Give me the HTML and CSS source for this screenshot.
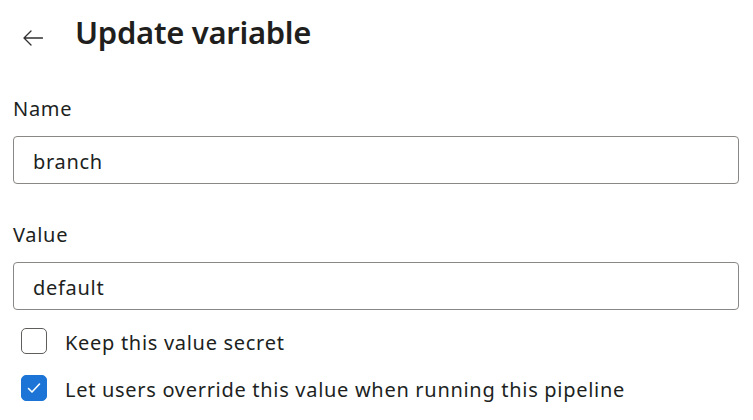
FILE: index.html
```html
<!DOCTYPE html>
<html lang="en">
<head>
<meta charset="utf-8">
<title>Update variable</title>
<link rel="stylesheet" href="styles.css">
</head>
<body>
<div class="page">
  <header class="header">
    <button class="back" aria-label="Back">
      <svg width="20" height="16" viewBox="0 0 20 16" fill="none" stroke="#323130" stroke-width="1.3" stroke-linecap="round" stroke-linejoin="round">
        <path d="M19.5 8H1M8 1L1 8l7 7"/>
      </svg>
    </button>
    <h1 class="title">Update variable</h1>
  </header>
  <div class="field field-name">
    <label class="label">Name</label>
    <div class="input">branch</div>
  </div>
  <div class="field field-value">
    <label class="label">Value</label>
    <div class="input">default</div>
  </div>
  <div class="checks">
    <label class="check">
      <span class="box"></span>
      <span class="check-text">Keep this value secret</span>
    </label>
    <label class="check">
      <span class="box checked">
        <svg width="14" height="12" viewBox="0 0 14 12" fill="none" stroke="#fff" stroke-width="1.6" stroke-linecap="round" stroke-linejoin="round"><path d="M1.5 6.5l3.5 3.5L12.5 2"/></svg>
      </span>
      <span class="check-text">Let users override this value when running this pipeline</span>
    </label>
  </div>
</div>
</body>
</html>
```
FILE: styles.css
```css
html, body {
  margin: 0;
  padding: 0;
  background: #ffffff;
}
body {
  font-family: "Noto Sans", "Open Sans", sans-serif;
  color: #201f1e;
}
.page {
  padding: 0 14px 0 13px;
}
.header {
  display: flex;
  align-items: flex-start;
  height: 64px;
  gap: 32px;
}
.back {
  border: 0;
  background: none;
  padding: 0;
  margin: 30px 0 0 10px;
  width: 20px;
  height: 16px;
  display: flex;
}
.title {
  margin: 12px 0 0 0;
  font-size: 31px;
  font-weight: 600;
  line-height: 40px;
  letter-spacing: -0.3px;
  color: #201f1e;
}
.field {
  display: flex;
  flex-direction: column;
}
.field-name {
  margin-top: 33px;
}
.field-value {
  margin-top: 39px;
}
.label {
  font-size: 20px;
  line-height: 24px;
  letter-spacing: 0.7px;
  margin-bottom: 15px;
}
.input {
  height: 44px;
  padding: 2px 19px 0;
  border: 1px solid #8a8886;
  border-radius: 4px;
  font-size: 20px;
  line-height: 46px;
  letter-spacing: 0.7px;
  overflow: hidden;
}
.checks {
  display: flex;
  flex-direction: column;
  gap: 19px;
  margin-top: 18px;
  padding-left: 8px;
}
.check {
  display: flex;
  align-items: flex-start;
  gap: 18px;
  font-size: 20px;
  line-height: 26px;
  letter-spacing: 0.7px;
}
.check-text {
  margin-top: 2px;
}
.box {
  width: 24px;
  height: 24px;
  border: 1px solid #605e5c;
  border-radius: 5px;
  box-sizing: content-box;
  display: flex;
  align-items: center;
  justify-content: center;
  flex: none;
}
.box.checked {
  background: #1b74d6;
  border-color: #1b74d6;
}
```
